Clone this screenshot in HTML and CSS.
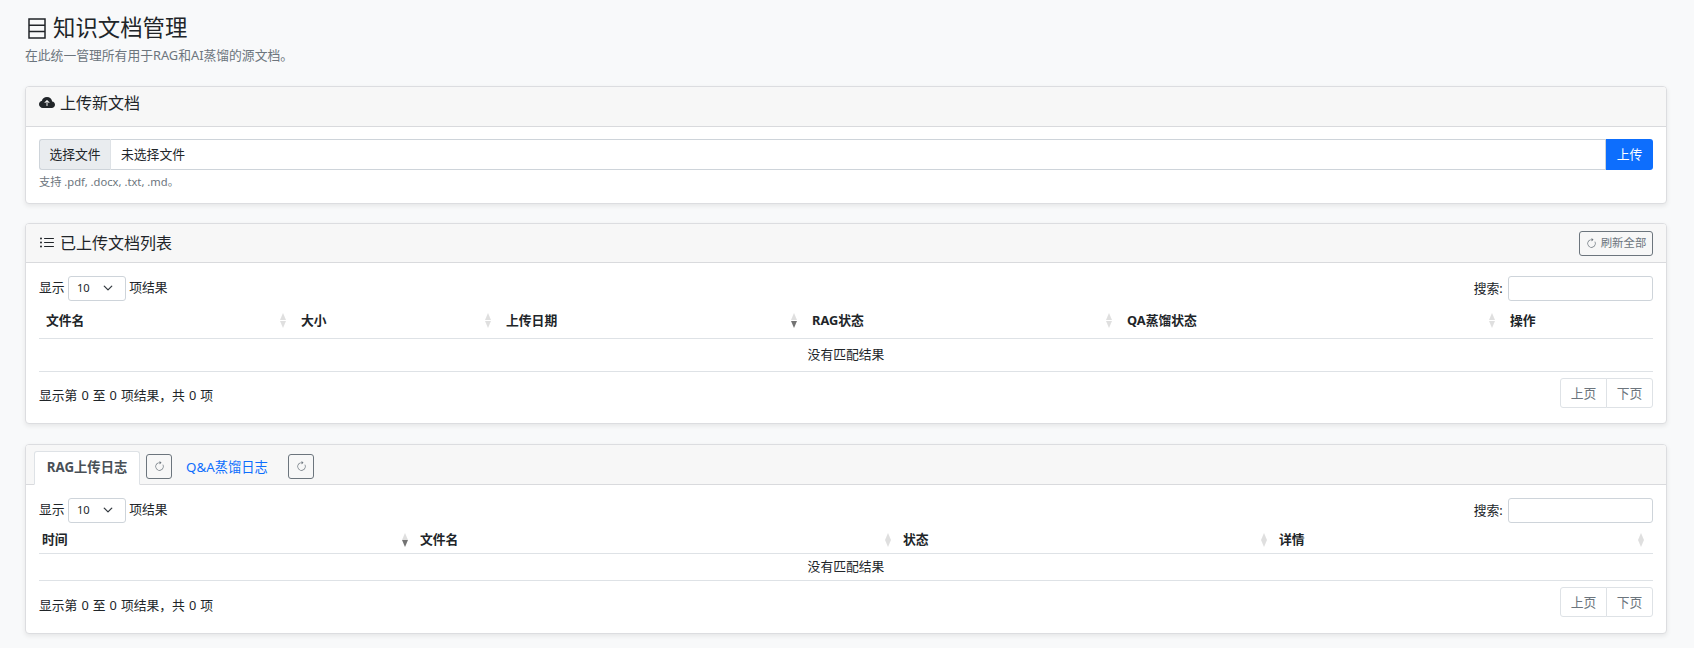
FILE: index.html
```html
<!DOCTYPE html>
<html lang="zh-CN">
<head>
<meta charset="utf-8">
<title>知识文档管理</title>
<link rel="stylesheet" href="styles.css">
</head>
<body>
<main class="page">
  <header class="page-head">
    <h1 class="page-title">
      <svg class="title-icon" viewBox="0 0 18 21" aria-hidden="true"><path d="M1 1h16v19H1zM1 7.2h16M1 13.6h16" fill="none" stroke="currentColor" stroke-width="1.5"/></svg>
      <span>知识文档管理</span>
    </h1>
    <p class="page-sub">在此统一管理所有用于RAG和AI蒸馏的源文档。</p>
  </header>

  <section class="card card-upload">
    <div class="card-header header-upload">
      <h2 class="card-title">
        <svg class="head-icon" viewBox="0 0 16 16" aria-hidden="true"><path fill="currentColor" d="M8 2a5.53 5.53 0 0 0-3.594 1.342c-.766.66-1.321 1.52-1.464 2.383C1.266 6.095 0 7.555 0 9.318 0 11.366 1.708 13 3.781 13h8.906C14.502 13 16 11.57 16 9.773c0-1.636-1.242-2.969-2.834-3.194C12.923 3.999 10.69 2 8 2zm2.354 5.146a.5.5 0 0 1-.708.708L8.5 6.707V10.5a.5.5 0 0 1-1 0V6.707L6.354 7.854a.5.5 0 1 1-.708-.708l2-2a.5.5 0 0 1 .708 0l2 2z"/></svg>
        <span>上传新文档</span>
      </h2>
    </div>
    <div class="card-body upload-body">
      <div class="file-group">
        <span class="file-btn">选择文件</span>
        <span class="file-name">未选择文件</span>
        <button class="upload-btn" type="button">上传</button>
      </div>
      <small class="hint">支持 .pdf, .docx, .txt, .md。</small>
    </div>
  </section>

  <section class="card card-docs">
    <div class="card-header header-split">
      <h2 class="card-title">
        <svg class="head-icon" viewBox="0 0 16 16" aria-hidden="true"><path fill="currentColor" fill-rule="evenodd" d="M5 11.5a.5.5 0 0 1 .5-.5h9a.5.5 0 0 1 0 1h-9a.5.5 0 0 1-.5-.5zm0-4a.5.5 0 0 1 .5-.5h9a.5.5 0 0 1 0 1h-9a.5.5 0 0 1-.5-.5zm0-4a.5.5 0 0 1 .5-.5h9a.5.5 0 0 1 0 1h-9a.5.5 0 0 1-.5-.5zm-3 1a1 1 0 1 0 0-2 1 1 0 0 0 0 2zm0 4a1 1 0 1 0 0-2 1 1 0 0 0 0 2zm0 4a1 1 0 1 0 0-2 1 1 0 0 0 0 2z"/></svg>
        <span>已上传文档列表</span>
      </h2>
      <button class="btn-outline btn-refresh-all" type="button">
        <svg class="refresh" viewBox="0 0 16 16" aria-hidden="true"><path fill="currentColor" fill-rule="evenodd" d="M8 3a5 5 0 1 0 4.546 2.914.5.5 0 0 1 .908-.417A6 6 0 1 1 8 2v1z"/><path fill="currentColor" d="M8 4.466V.534a.25.25 0 0 1 .41-.192l2.36 1.966c.12.1.12.284 0 .384L8.41 4.658A.25.25 0 0 1 8 4.466z"/></svg>
        <span>刷新全部</span>
      </button>
    </div>
    <div class="card-body table-body">
      <div class="dt-top">
        <label class="dt-length">显示 <span class="dt-select">10<svg class="chev" viewBox="0 0 16 16" aria-hidden="true"><path fill="none" stroke="currentColor" stroke-width="2" stroke-linecap="round" stroke-linejoin="round" d="M2 5l6 6 6-6"/></svg></span> 项结果</label>
        <label class="dt-search">搜索: <span class="dt-input"></span></label>
      </div>
      <table class="dt docs">
        <thead>
          <tr>
            <th class="d1 sort">文件名</th>
            <th class="d2 sort">大小</th>
            <th class="d3 sort active">上传日期</th>
            <th class="d4 sort">RAG状态</th>
            <th class="d5 sort">QA蒸馏状态</th>
            <th class="d6">操作</th>
          </tr>
        </thead>
        <tbody><tr><td colspan="6">没有匹配结果</td></tr></tbody>
      </table>
      <div class="dt-bottom">
        <span class="dt-info">显示第 0 至 0 项结果，共 0 项</span>
        <nav class="pager"><span class="pg">上页</span><span class="pg">下页</span></nav>
      </div>
    </div>
  </section>

  <section class="card card-logs">
    <div class="card-header tabs">
      <span class="tab tab-active">RAG上传日志</span>
      <button class="btn-outline btn-icon btn-tab-first" type="button" aria-label="刷新">
        <svg class="refresh" viewBox="0 0 16 16" aria-hidden="true"><path fill="currentColor" fill-rule="evenodd" d="M8 3a5 5 0 1 0 4.546 2.914.5.5 0 0 1 .908-.417A6 6 0 1 1 8 2v1z"/><path fill="currentColor" d="M8 4.466V.534a.25.25 0 0 1 .41-.192l2.36 1.966c.12.1.12.284 0 .384L8.41 4.658A.25.25 0 0 1 8 4.466z"/></svg>
      </button>
      <span class="tab tab-link">Q&amp;A蒸馏日志</span>
      <button class="btn-outline btn-icon" type="button" aria-label="刷新">
        <svg class="refresh" viewBox="0 0 16 16" aria-hidden="true"><path fill="currentColor" fill-rule="evenodd" d="M8 3a5 5 0 1 0 4.546 2.914.5.5 0 0 1 .908-.417A6 6 0 1 1 8 2v1z"/><path fill="currentColor" d="M8 4.466V.534a.25.25 0 0 1 .41-.192l2.36 1.966c.12.1.12.284 0 .384L8.41 4.658A.25.25 0 0 1 8 4.466z"/></svg>
      </button>
    </div>
    <div class="card-body table-body">
      <div class="dt-top">
        <label class="dt-length">显示 <span class="dt-select">10<svg class="chev" viewBox="0 0 16 16" aria-hidden="true"><path fill="none" stroke="currentColor" stroke-width="2" stroke-linecap="round" stroke-linejoin="round" d="M2 5l6 6 6-6"/></svg></span> 项结果</label>
        <label class="dt-search">搜索: <span class="dt-input"></span></label>
      </div>
      <table class="dt logs">
        <thead>
          <tr>
            <th class="l1 sort active">时间</th>
            <th class="l2 sort">文件名</th>
            <th class="l3 sort">状态</th>
            <th class="l4 sort">详情</th>
          </tr>
        </thead>
        <tbody><tr><td colspan="4">没有匹配结果</td></tr></tbody>
      </table>
      <div class="dt-bottom">
        <span class="dt-info">显示第 0 至 0 项结果，共 0 项</span>
        <nav class="pager"><span class="pg">上页</span><span class="pg">下页</span></nav>
      </div>
    </div>
  </section>
</main>
</body>
</html>
```

FILE: styles.css
```css
* { box-sizing: border-box; }
html, body { margin: 0; padding: 0; }
body {
  background: #f8f9fa;
  color: #212529;
  font-family: "Noto Sans", "Noto Sans CJK SC", sans-serif;
  font-size: 12.8px;
  line-height: 1.5;
}
.page { padding: 13px 27px 14px 25px; }

.page-head { height: 73px; }
.page-title {
  display: flex;
  align-items: center;
  gap: 7px;
  margin: 0;
  height: 30px;
  font-size: 22.4px;
  font-weight: 400;
  line-height: 30px;
}
.title-icon { width: 18px; height: 21px; margin-left: 3px; flex: none; }
.page-sub { margin: 3px 0 0; color: #6c757d; line-height: 18px; }

.card {
  background: #fff;
  border: 1px solid #dcdde0;
  border-radius: 4px;
  box-shadow: 0 2px 5px rgba(0, 0, 0, .08);
}
.card-upload { height: 118px; }
.card-docs { height: 201px; margin-top: 19px; }
.card-logs { height: 190px; margin-top: 20px; }

.card-header {
  background: #f7f7f7;
  border-bottom: 1px solid #d9dadd;
  border-radius: 3px 3px 0 0;
  padding: 0 13px;
  height: 40px;
  display: flex;
  align-items: center;
}
.header-upload { padding-bottom: 8px; }
.card-docs .card-header { height: 39px; }
.header-split { justify-content: space-between; }
.card-title {
  display: flex;
  align-items: center;
  gap: 5px;
  margin: 0;
  font-size: 16px;
  font-weight: 400;
  line-height: 24px;
}
.head-icon { width: 16px; height: 16px; flex: none; }

.btn-outline {
  display: inline-flex;
  align-items: center;
  justify-content: center;
  background: transparent;
  border: 1px solid #6c757d;
  border-radius: 3px;
  color: #6c757d;
  font: inherit;
  padding: 0;
}
.btn-refresh-all {
  width: 74px;
  height: 25px;
  gap: 4px;
  font-size: 11.4px;
}
.refresh { width: 11px; height: 11px; flex: none; }
.btn-icon { width: 26px; height: 25px; }

.upload-body { padding: 12px 13px 0; }
.file-group {
  display: flex;
  height: 31px;
  align-items: stretch;
  line-height: 29px;
}
.file-btn {
  width: 72px;
  flex: none;
  background: #e9ecef;
  border: 1px solid #ced4da;
  border-right-color: #dee2e6;
  border-radius: 3px 0 0 3px;
  text-align: center;
}
.file-name {
  flex: 1;
  background: #fff;
  border: 1px solid #ced4da;
  border-left: 0;
  padding-left: 10px;
}
.upload-btn {
  width: 47px;
  flex: none;
  background: #0d6efd;
  border: 0;
  border-radius: 0 3px 3px 0;
  color: #fff;
  font: inherit;
  padding: 0;
}
.hint {
  display: block;
  margin-top: 3px;
  color: #6c757d;
  font-size: 11.2px;
  line-height: 17px;
}

.table-body { padding: 13px 13px 0; }
.dt-top {
  display: flex;
  justify-content: space-between;
  align-items: center;
  height: 25px;
}
.dt-length, .dt-search { display: flex; align-items: center; white-space: pre; }
.dt-length { margin-top: -1px; }
.dt-select {
  display: flex;
  align-items: center;
  justify-content: space-between;
  width: 58px;
  height: 25px;
  padding: 0 12px 0 8px;
  background: #fff;
  border: 1px solid #ced4da;
  border-radius: 3px;
  font-size: 11.2px;
}
.chev { width: 10px; height: 10px; color: #343a40; }
.dt-input {
  display: block;
  width: 145px;
  height: 25px;
  margin-left: 2px;
  background: #fff;
  border: 1px solid #ced4da;
  border-radius: 3px;
}

.dt {
  width: 100%;
  table-layout: fixed;
  border-collapse: collapse;
}
.dt th {
  position: relative;
  text-align: left;
  font-weight: 700;
  border-bottom: 1px solid #dee2e6;
}
.dt td {
  text-align: center;
  border-bottom: 1px solid #dee2e6;
  padding: 0;
}
.docs th { height: 37px; padding: 2px 7px 0; }
.docs td { height: 33px; }
.logs th { height: 30px; padding: 4px 3px 0; }
.logs td { height: 27px; }
.d1 { width: 255px; }
.d2 { width: 205px; }
.d3 { width: 306px; }
.d4 { width: 315px; }
.d5 { width: 383px; }
.l1 { width: 378px; }
.l2 { width: 483px; }
.l3 { width: 376px; }
.sort::before, .sort::after {
  content: "";
  position: absolute;
  right: 8px;
  width: 0;
  height: 0;
  border-left: 3.5px solid transparent;
  border-right: 3.5px solid transparent;
}
.logs .sort::before, .logs .sort::after { right: 9px; }
.sort::before {
  top: 50%;
  margin-top: -6px;
  border-bottom: 7px solid rgba(0, 0, 0, .125);
}
.sort::after {
  top: 50%;
  margin-top: 1.5px;
  border-top: 7px solid rgba(0, 0, 0, .125);
}
.logs .sort::before { margin-top: -5px; }
.logs .sort::after { margin-top: 2.5px; }
.sort.active::after { border-top-color: rgba(0, 0, 0, .55); }

.dt-bottom {
  display: flex;
  justify-content: space-between;
  align-items: flex-start;
  padding-top: 6px;
}
.dt-info { line-height: 35px; word-spacing: .7px; }
.logs + .dt-bottom .dt-info { line-height: 37px; }
.pager { display: flex; }
.pg {
  width: 47px;
  height: 30px;
  border: 1px solid #dee2e6;
  margin-left: -1px;
  text-align: center;
  line-height: 28px;
  color: #6c757d;
  background: #fff;
}
.pg:first-child { border-radius: 3px 0 0 3px; }
.pg:last-child { border-radius: 0 3px 3px 0; }

.tabs { padding: 0 0 0 8px; align-items: flex-end; }
.tab { display: block; height: 33px; line-height: 31px; font-size: 13.3px; }
.tab-active {
  width: 106px;
  margin-bottom: -1px;
  height: 34px;
  background: #fff;
  border: 1px solid #dee2e6;
  border-bottom-color: #fff;
  border-radius: 3px 3px 0 0;
  text-align: center;
  font-weight: 700;
  color: #495057;
}
.tab-link { width: 116px; padding-right: 6px; line-height: 33px; text-align: center; color: #0d6efd; }
.tabs .btn-icon { align-self: center; margin-top: 4px; }
.btn-tab-first { margin-left: 6px; }
```
